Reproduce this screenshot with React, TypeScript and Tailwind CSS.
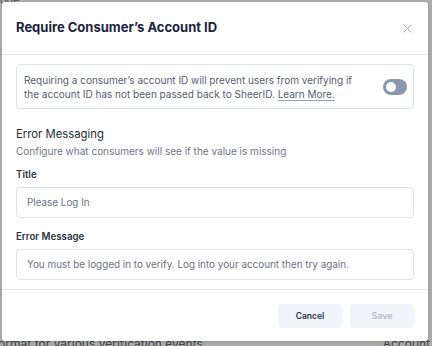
import { X } from "lucide-react";

function Field({ label, value, top }: { label: string; value: string; top: string }) {
  return (
    <div className={`flex flex-col ${top}`}>
      <label className="text-[9.7px] font-semibold leading-[12px] text-[#2d3340]">{label}</label>
      <div className="mt-[6px] flex h-[31px] shrink-0 items-center rounded-[4px] border border-[#dfe3ea] px-[10px] text-[9.9px] text-[#6b7180]">
        {value}
      </div>
    </div>
  );
}

export default function App() {
  return (
    <div
      className="relative h-[346px] w-[432px] overflow-hidden bg-[#ababab]"
      style={{ fontFamily: "Inter, 'Noto Sans', sans-serif" }}
    >
      {/* page behind the overlay */}
      <div className="absolute left-0 top-[-8px] text-[11px] text-[#555]">ode</div>
      <div className="absolute bottom-[-7px] left-[-2px] text-[12px] text-[#444]">ormat for various verification events.</div>
      <div className="absolute bottom-[-7px] right-[2px] text-[12px] text-[#444]">Account</div>

      <div className="absolute left-[2px] top-[2px] flex h-[339px] w-[426px] flex-col rounded-[3px] bg-white shadow">
        <div className="flex h-[53px] shrink-0 items-center justify-between border-b border-[#e8eaee] pl-[14px] pr-[13px]">
          <h2 className="text-[13px] font-bold text-[#1b2340]">Require Consumer’s Account ID</h2>
          <X className="h-[15px] w-[15px] text-[#8e95a3]" strokeWidth={1.1} />
        </div>

        <div className="flex flex-col px-[14px] pt-[9px]">
          <div className="flex h-[45px] shrink-0 items-center justify-between rounded-[4px] border border-[#dfe3ea] pl-[7px] pr-[6px]">
            <p className="text-[10px] leading-[14px] text-[#565d6b]">
              Requiring a consumer’s account ID will prevent users from verifying if
              <br />
              the account ID has not been passed back to SheerID.{" "}
              <span className="underline decoration-[#9aa1ae] underline-offset-2">Learn More.</span>
            </p>
            <div className="flex h-[16px] w-[24px] items-center rounded-full bg-[#8a97ae] px-[3px]">
              <div className="h-[10px] w-[10px] rounded-full bg-white" />
            </div>
          </div>

          <div className="mt-[17px] text-[11.3px] leading-[16px] text-[#262b36]">Error Messaging</div>
          <div className="mt-[2px] text-[10px] leading-[14px] text-[#6f7686]">Configure what consumers will see if the value is missing</div>

          <Field top="mt-[11px]" label="Title" value="Please Log In" />
          <Field top="mt-[13px]" label="Error Message" value="You must be logged in to verify. Log into your account then try again." />
        </div>

        <div className="mt-[9px] flex justify-end gap-[8px] border-t border-[#e8eaee] px-[14px] pt-[14px]">
          <button className="h-[24px] w-[64px] rounded-[3px] bg-[#f1f4f8] text-[8.5px] font-semibold text-[#2d3340]">Cancel</button>
          <button className="h-[24px] w-[64px] rounded-[3px] bg-[#f1f4f8] text-[9px] font-medium text-[#aeb4c0]">Save</button>
        </div>
      </div>
    </div>
  );
}
